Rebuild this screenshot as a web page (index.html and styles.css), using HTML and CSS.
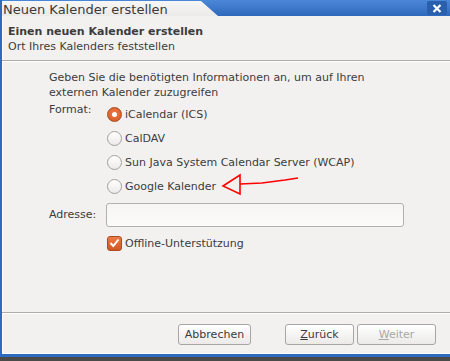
FILE: index.html
```html
<!DOCTYPE html>
<html lang="de">
<head>
    <meta charset="UTF-8">
    <title>Neuen Kalender erstellen</title>
    <link rel="stylesheet" href="styles.css">
</head>
<body>
    <div class="window">
        <div class="titlebar">
            <div class="title-tab">Neuen Kalender erstellen</div>
            <div class="close-btn">
                <svg width="10" height="9" viewBox="0 0 10 9">
                    <path d="M1.5 1 L8.5 8 M8.5 1 L1.5 8" stroke="#ffffff" stroke-width="2.2"/>
                </svg>
            </div>
        </div>

        <div class="wizard-header">
            <h1>Einen neuen Kalender erstellen</h1>
            <p>Ort Ihres Kalenders feststellen</p>
        </div>
        <div class="separator"></div>

        <div class="content">
            <p class="intro">Geben Sie die benötigten Informationen an, um auf Ihren externen Kalender zuzugreifen</p>

            <div class="form-grid">
                <div class="label format-label">Format:</div>
                <div class="options">
                    <div class="option"><span class="radio checked"></span>iCalendar (ICS)</div>
                    <div class="option"><span class="radio"></span>CalDAV</div>
                    <div class="option"><span class="radio"></span>Sun Java System Calendar Server (WCAP)</div>
                    <div class="option"><span class="radio"></span>Google Kalender</div>
                </div>

                <div class="label address-label">Adresse:</div>
                <div class="address-field"><div class="text-input"></div></div>

                <div></div>
                <div class="option check-row">
                    <span class="checkbox">
                        <svg width="11" height="10" viewBox="0 0 11 10">
                            <path d="M1.5 5 L4.3 8 L9.5 1.5" fill="none" stroke="#ffffff" stroke-width="2"/>
                        </svg>
                    </span>Offline-Unterstützung
                </div>
            </div>
        </div>

        <div class="separator"></div>
        <div class="footer">
            <button class="btn btn-cancel">Abbrechen</button>
            <button class="btn btn-back"><u>Z</u>urück</button>
            <button class="btn btn-next" disabled><u>W</u>eiter</button>
        </div>

        <svg class="annotation" width="85" height="28" viewBox="0 0 85 28">
            <path d="M5 16 L22 5 L22 24 Z" fill="none" stroke="#ff0000" stroke-width="1.6"/>
            <path d="M22 14 L44 13 L67 10 L80 8" fill="none" stroke="#ff0000" stroke-width="1.6"/>
        </svg>
    </div>
</body>
</html>
```

FILE: styles.css
```css
body {
    margin: 0;
    padding: 0;
    background-color: #4a4a48;
    font-family: "DejaVu Sans", sans-serif;
    font-size: 11px;
    color: #3c3c3c;
}

.window {
    position: relative;
    width: 450px;
    height: 357px;
    box-sizing: border-box;
    background-color: #f2f1f0;
    border-left: 2px solid #2d6ac0;
    border-bottom: 3px solid #2d6ac0;
    box-shadow: inset 1px 0 #ffffff, inset 0 -1px #ffffff;
    display: flex;
    flex-direction: column;
    overflow: hidden;
}

/* barra de titulo */
.titlebar {
    position: relative;
    height: 16px;
    margin-left: -2px;
    background: linear-gradient(#4b87d7, #2f69bd);
    flex-shrink: 0;
}

.title-tab {
    width: 218px;
    height: 16px;
    padding-left: 3px;
    box-sizing: border-box;
    background: linear-gradient(#f7f7f6, #eceae8);
    clip-path: polygon(0 1px, 201px 1px, 218px 100%, 0 100%);
    font-size: 13px;
    line-height: 19px;
    color: #3a3a3a;
    white-space: nowrap;
}

.close-btn {
    position: absolute;
    right: 3px;
    top: 1px;
    width: 20px;
    height: 14px;
    background: #2a5fae;
    border-radius: 2px;
    display: flex;
    align-items: center;
    justify-content: center;
}

.wizard-header {
    padding: 8px 6px 6px;
    flex-shrink: 0;
}

.wizard-header h1 {
    margin: 0;
    font-size: 11px;
    line-height: 15px;
    font-weight: bold;
}

.wizard-header p {
    margin: 0;
    line-height: 15px;
}

.separator {
    height: 0;
    border-top: 1px solid #aeaca8;
    border-bottom: 1px solid #ffffff;
    flex-shrink: 0;
}

.content {
    flex: 1;
    padding: 8px 0 0 47px;
}

.intro {
    margin: 0;
    width: 330px;
    line-height: 15px;
}

.form-grid {
    display: grid;
    grid-template-columns: 57px 1fr;
    margin-top: 2px;
}

.label {
    line-height: 15px;
}

.format-label {
    padding-top: 0;
}

.address-label {
    align-self: center;
    margin-top: 3px;
}

.option {
    height: 24px;
    display: flex;
    align-items: center;
    white-space: nowrap;
}

.radio {
    width: 13px;
    height: 13px;
    margin: 0 3px 0 1px;
    border: 1px solid #a3a09c;
    border-radius: 50%;
    background: linear-gradient(#ffffff, #eceae7);
    display: flex;
    align-items: center;
    justify-content: center;
}

.radio.checked {
    border-color: #a94b1e;
    background: radial-gradient(circle at 50% 40%, #f07a45, #cf5724);
}

.radio.checked::after {
    content: "";
    width: 5px;
    height: 5px;
    border-radius: 50%;
    background: #ffffff;
}

.address-field {
    padding: 5px 0 0;
}

.text-input {
    width: 296px;
    height: 22px;
    border: 1px solid #b4b1ad;
    border-radius: 3px;
    background: linear-gradient(#f6f5f4, #fbfbfa);
}

.check-row {
    margin-top: 4px;
}

.checkbox {
    width: 13px;
    height: 13px;
    margin: 0 3px 0 1px;
    border: 1px solid #a94b1e;
    border-radius: 3px;
    background: linear-gradient(#ee7a45, #cf5724);
    display: flex;
    align-items: center;
    justify-content: center;
}

.footer {
    height: 40px;
    display: flex;
    align-items: center;
    justify-content: flex-end;
    padding-right: 14px;
    flex-shrink: 0;
}

.btn {
    height: 21px;
    margin: 0;
    padding: 0;
    border: 1px solid #a8a6a2;
    border-radius: 3px;
    background: linear-gradient(#ffffff, #ebeae8);
    font-family: "DejaVu Sans", sans-serif;
    font-size: 11px;
    color: #3c3c3c;
}

.btn-cancel {
    width: 73px;
}

.btn-back {
    width: 69px;
    margin-left: 34px;
}

.btn-next {
    width: 79px;
    margin-left: 3px;
    color: #a9a8a5;
}

.annotation {
    position: absolute;
    left: 216px;
    top: 170px;
    pointer-events: none;
}
```
